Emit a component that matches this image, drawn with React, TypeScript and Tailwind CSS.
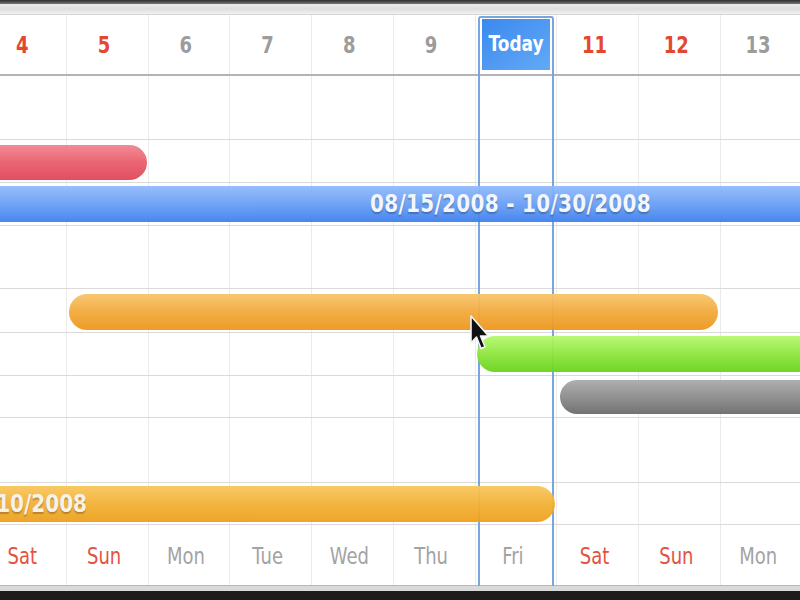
import React from "react"

const numbers = ["4", "5", "6", "7", "8", "9", "Today", "11", "12", "13"]
const days = ["Sat", "Sun", "Mon", "Tue", "Wed", "Thu", "Fri", "Sat", "Sun", "Mon"]
const weekend = [0, 1, 7, 8]

const Cells: React.FC = () => (
    <div className="ml-[-15px] grid h-full grid-cols-[repeat(10,81.75px)]">
        {numbers.map((_, i) => (
            <div key={i} className="border-r border-[#ebebeb]" />
        ))}
    </div>
)

const Row: React.FC<{ h: string; children?: React.ReactNode }> = ({ h, children }) => (
    <div className={`relative shrink-0 border-b border-[#dadada] ${h}`}>
        <Cells />
        {children}
    </div>
)

const Bar: React.FC<{ className: string; children?: React.ReactNode }> = ({ className, children }) => (
    <div className={`absolute z-10 flex items-center rounded-full bg-gradient-to-b opacity-95 ${className}`}>
        {children}
    </div>
)

const Cursor: React.FC = () => (
    <svg className="absolute left-[468px] top-[299px] z-30" width="24" height="38" viewBox="0 0 24 38">
        <path
            d="M3 2 L3 29 L8.5 23 L13 34.5 L17 32.8 L12.5 22 L20.5 22 Z"
            fill="#111"
            stroke="#f4f4f4"
            strokeWidth="1.6"
            strokeLinejoin="round"
        />
    </svg>
)

const App: React.FC = () => {
    return (
        <div className="relative flex h-[600px] w-[800px] flex-col overflow-hidden bg-white font-['DejaVu_Sans',sans-serif]">
            <div className="h-[4px] shrink-0 bg-gradient-to-b from-[#2e2e2e] to-[#777]" />
            <div className="h-[11px] shrink-0 border-b border-[#d6d6d6] bg-gradient-to-b from-[#eaeaea] via-[#dedede] to-[#f1f1f1]" />

            <div className="relative flex flex-1 flex-col">
                {/* header */}
                <div className="h-[61px] shrink-0 border-b-2 border-[#b4b4b4]">
                    <div className="ml-[-15px] grid h-full grid-cols-[repeat(10,81.75px)]">
                        {numbers.map((n, i) => (
                            <div
                                key={i}
                                className={`flex items-center justify-center border-r border-[#ebebeb] pr-[6px] text-[18px] font-bold ${
                                    weekend.includes(i) ? "text-[#e4472f]" : "text-[#9c9c9c]"
                                }`}
                            >
                                <span className="inline-block scale-y-[1.25]">{n === "Today" ? "" : n}</span>
                            </div>
                        ))}
                    </div>
                </div>

                <Row h="h-[64px]" />
                <Row h="h-[43px]">
                    <Bar className="left-[-40px] top-[5px] h-[35px] w-[187px] from-[#f3848f] via-[#e85d6c] to-[#df4658]" />
                </Row>
                <Row h="h-[43px]">
                    <Bar className="left-[-20px] top-[3px] h-[36px] w-[860px] from-[#92bbfb] via-[#6a9ff5] to-[#3e80ef] pl-[390px]">
                        <span className="inline-block scale-y-[1.2] text-[20px] font-bold tracking-[0.3px] text-[#f3f6fb] [text-shadow:0_1px_1px_rgba(0,0,0,0.25)]">
                            08/15/2008 - 10/30/2008
                        </span>
                    </Bar>
                </Row>
                <Row h="h-[63px]" />
                <Row h="h-[44px]">
                    <Bar className="left-[69px] top-[5px] h-[36px] w-[649px] from-[#f8c46a] via-[#f2aa3a] to-[#ec971c]" />
                </Row>
                <Row h="h-[43px]">
                    <Bar className="left-[477px] top-[3px] h-[36px] w-[400px] from-[#b6f96e] via-[#8ee63c] to-[#68d31c]" />
                </Row>
                <Row h="h-[42px]">
                    <Bar className="left-[560px] top-[4px] h-[34px] w-[300px] from-[#ababab] via-[#8c8c8c] to-[#6b6b6b]" />
                </Row>
                <Row h="h-[65px]" />
                <Row h="h-[42px]">
                    <Bar className="left-[-300px] top-[3px] h-[36px] w-[855px] from-[#f8c75c] via-[#f3b136] to-[#eda11c]">
                        <span className="inline-block w-[387px] scale-y-[1.2] text-right text-[20px] font-bold text-[#f6f2e8] [text-shadow:0_1px_1px_rgba(0,0,0,0.25)]">
                            08/01/2008 - 10/10/2008
                        </span>
                    </Bar>
                </Row>

                {/* footer */}
                <div className="h-[61px] shrink-0 border-b border-[#b8b8b8]">
                    <div className="ml-[-15px] grid h-full grid-cols-[repeat(10,81.75px)]">
                        {days.map((d, i) => (
                            <div
                                key={i}
                                className={`flex items-center justify-center border-r border-[#ebebeb] pr-[6px] text-[18px] ${
                                    weekend.includes(i) ? "text-[#e2533f]" : "text-[#a3a3a3]"
                                }`}
                            >
                                <span className="inline-block scale-y-[1.25]">{d}</span>
                            </div>
                        ))}
                    </div>
                </div>

                {/* today marker */}
                <div className="absolute bottom-0 left-[478px] top-[1px] z-[5] flex w-[76px] flex-col rounded-t-[3px] border-x-2 border-t-2 border-[#78a6de]">
                    <div className="mx-[2px] mt-[1px] flex h-[51px] items-center justify-center bg-gradient-to-br from-[#3c89ee] to-[#62a9f6] text-[17px] font-bold text-white">
                        <span className="inline-block scale-y-[1.25]">Today</span>
                    </div>
                </div>

                <Cursor />
            </div>

            <div className="h-[5px] shrink-0 bg-[#d9d9d9]" />
            <div className="h-[9px] shrink-0 bg-[#1c1c1c]" />
        </div>
    )
}

export default App
